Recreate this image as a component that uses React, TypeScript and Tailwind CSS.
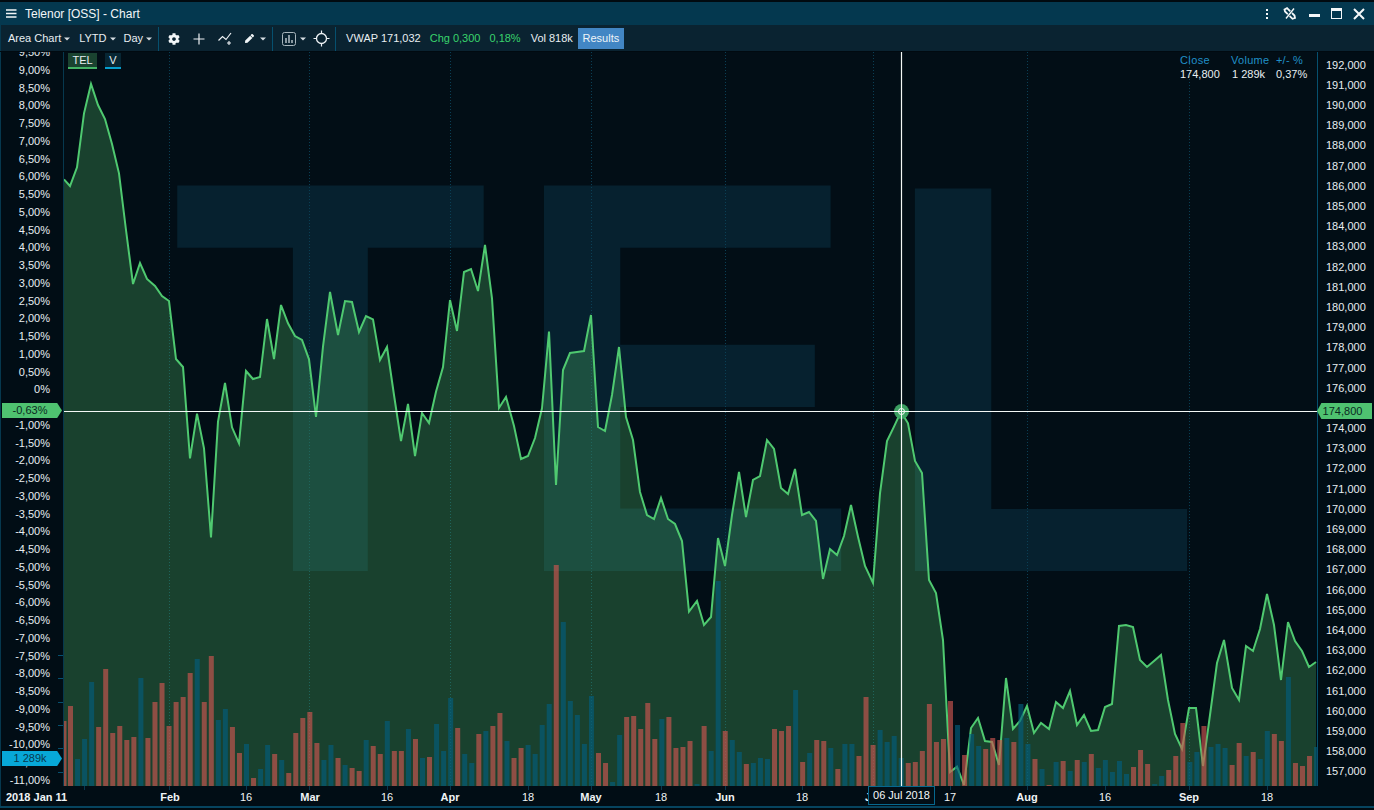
import React from "react";
import { FaCog, FaPen } from "react-icons/fa";

const seg = (ox: number, oy: number, s: string) =>
  s.trim().split(/\s+/).map((p) => {
    const [a, b] = p.split(",").map(Number);
    return [ox + a / 3, oy + b / 3] as [number, number];
  });

const linePts = [
  ...seg(60, 75, "12,313 30,333 51,277 72,115 93,27 114,90 135,132 156,207 177,295 198,465 219,627 240,564 261,612 285,633 306,663 327,678 348,852 369,876 390,1150 411,1016 432,1120 453,1387 474,1040 495,924 516,1057 537,1105 558,888 579,912 600,906 621,732 642,852 663,690 684,745 705,783 726,795 747,853 768,1026 789,815 810,651 834,780 855,678 876,681 897,771 918,723 939,733 960,855"),
  ...seg(370, 235, "51,336 72,480 93,618 114,507 135,663 156,534 177,564 198,470 219,396 240,195 261,288 282,111 303,102 324,168 345,30 366,190 387,519 408,486 432,573 453,672 474,663 495,609 516,520 537,290 558,750 579,405 600,354 621,351 642,348 663,240 684,576 705,588 726,480 747,336 768,546 789,615 810,771 831,840 852,852 873,789 894,852 915,867 936,918 957,1130"),
  ...seg(680, 400, "51,603 72,675 93,651 114,414 135,498 156,345 177,216 198,351 219,240 240,228 261,120 282,147 303,264 324,282 345,207 366,345 387,336 408,363 429,537 450,447 471,465 492,408 513,315 534,410 555,498 579,549 600,280 621,123 642,80 663,35 684,70 705,183 726,219 747,540 768,579 789,720 810,1116 831,1100 852,1155 873,984 894,954 915,1023 936,1026 957,1095"),
  ...seg(990, 580, "48,294 69,447 90,423 111,378 132,459 153,429 177,447 198,366 219,384 240,333 261,435 282,405 303,453 324,450 345,381 366,372 387,138 408,135 429,141 450,240 471,261 492,243 513,225 534,360 555,462 576,507 597,384 618,384 639,558 660,405 681,249 702,180 726,324 747,360 768,198 789,213 810,147 831,42 852,135 873,300 894,126 915,183 936,213 957,261 978,246"),
];
const lineStr = linePts.map((p) => p.join(",")).join(" ");
const areaStr = `${linePts[0][0]},786 ${lineStr} ${linePts[linePts.length - 1][0]},786`;

const barsRaw =
  "r198 b357 b297 b126 r261 r87 r279 r258 r300 r291 b114 r294 r186 r129 r258 r186 r171 r99 b57 r186 r48 b240 b207 r261 r339 b312 r414 b387 b315 r342 b360 r399 r279 r234 r216 r309 b360 b315 r354 " +
  "b375 r384 r393 b300 r318 r342 b243 r333 r333 b267 r297 b354 r351 b252 b333 b174 r264 b342 b369 r282 b273 r258 r219 b303 r354 r324 b315 b342 b255 b192 r-225 b-54 b183 b225 b312 b168 r339 r369 b426 b285 r231 r228 r267 r189 r297 b237 r231 r324 " +
  "r321 r303 b432 r258 b333 b-177 r273 b300 b336 r372 b369 b354 b357 r267 r273 r258 b150 r366 b339 r300 r303 b324 r387 b312 b312 r348 r171 r315 b270 b306 b288 b354 r369 r366 r333 r192 r306 r297 r183 b255 r345 b282 b318 r327 r294 r300 b294 r306 b192 " +
  "b312 r357 b387 r435 b366 r363 b393 r360 b366 r342 b384 b360 b396 b363 b402 r381 r330 r372 b432 b408 r390 r348 r249 b366 b336 r258 b321 b312 b324 r375 r309 b348 r336 b357 b273 r282 r303 b111 r369 r378 r348 b321";
const bars = barsRaw.split(" ").map((t, i) => ({
  x: 68 + 7.04 * i,
  y: 640 + Number(t.slice(1)) / 3,
  red: t[0] === "r",
}));

const pct = [
  "9,50%", "9,00%", "8,50%", "8,00%", "7,50%", "7,00%", "6,50%", "6,00%", "5,50%", "5,00%", "4,50%", "4,00%", "3,50%", "3,00%", "2,50%", "2,00%", "1,50%", "1,00%", "0,50%", "0%",
  "-0,50%", "-1,00%", "-1,50%", "-2,00%", "-2,50%", "-3,00%", "-3,50%", "-4,00%", "-4,50%", "-5,00%", "-5,50%", "-6,00%", "-6,50%", "-7,00%", "-7,50%", "-8,00%", "-8,50%", "-9,00%", "-9,50%", "-10,00%", "-10,50%", "-11,00%",
];
const prices = Array.from({ length: 36 }, (_, i) => `${192 - i},000`);
const months = [169, 309, 450, 591, 725, 873, 1027, 1189];
const xLabels: [string, number, boolean][] = [
  ["Feb", 170, true], ["16", 246, false], ["Mar", 310, true], ["16", 387, false], ["Apr", 450, true], ["18", 528, false], ["May", 591, true], ["18", 661, false],
  ["Jun", 725, true], ["18", 802, false], ["Jul", 873, true], ["17", 950, false], ["Aug", 1027, true], ["16", 1105, false], ["Sep", 1189, true], ["18", 1267, false],
];
const xTicks = [84, 169, 246, 309, 387, 450, 528, 591, 661, 725, 802, 873, 950, 1027, 1105, 1189, 1267];
const leftTicks = [655, 678, 702, 725, 748, 772];
const wmFont = "'Liberation Sans', Arial, sans-serif";

const Caret = () => (
  <svg width="6" height="4" viewBox="0 0 6 4" className="ml-[3px] shrink-0">
    <path d="M0 0.5H6L3 3.5Z" fill="#d5dde2" />
  </svg>
);
const Sep = ({ cls }: { cls: string }) => <div className={`h-[24px] w-px bg-[#06506f] ${cls}`} />;

export default function App() {
  return (
    <div className="relative flex h-[810px] w-[1374px] flex-col overflow-hidden bg-[#010a10] text-[11px] text-[#e8eef2] [font-family:'Liberation_Sans',Arial,sans-serif]">
      <div className="h-[2px] shrink-0 bg-[#010a10]" />
      {/* title bar */}
      <div className="flex h-[23px] shrink-0 items-center border-l border-[#06384e] bg-[#04384f]">
        <svg width="11" height="9" viewBox="0 0 11 9" className="ml-[5px]">
          <path d="M0 1H10.5M0 4.5H10.5M0 8H10.5" stroke="#f2f6f8" strokeWidth="1.3" />
        </svg>
        <div className="ml-[8px] text-[12px] text-[#f2f6f8]">Telenor [OSS] - Chart</div>
        <div className="ml-auto flex items-center">
          <svg width="4" height="12" viewBox="0 0 4 12" className="mr-[14px]">
            <path d="M1 1h2v2H1zM1 5h2v2H1zM1 9h2v2H1z" fill="#f4f7f9" />
          </svg>
          <svg width="14" height="13" viewBox="0 0 14 13" fill="none" className="mr-[12px]">
            <path d="M1.5 2.5 L4 1.2 L11.5 8.5 L12 11 L9.5 11.8 L2 4.5 Z" stroke="#f4f7f9" strokeWidth="1.8" />
            <path d="M11.5 1 L2.5 12" stroke="#04384f" strokeWidth="2.6" />
            <path d="M11 1.5 L3 11.5" stroke="#f4f7f9" strokeWidth="1.4" />
          </svg>
          <div className="mr-[11px] mt-[4px] h-[3px] w-[11px] bg-[#f4f7f9]" />
          <div className="mr-[11px] h-[11px] w-[11px] border border-t-[3px] border-[#f4f7f9]" />
          <svg width="12" height="12" viewBox="0 0 12 12" className="mr-[9px]">
            <path d="M1 1L11 11M11 1L1 11" stroke="#f4f7f9" strokeWidth="2" />
          </svg>
        </div>
      </div>
      {/* toolbar */}
      <div className="flex h-[26px] shrink-0 items-center border-l border-[#06384e] bg-[#0a2331] pl-[7px] pt-px">
        <span>Area Chart</span>
        <Caret />
        <span className="ml-[9px]">LYTD</span>
        <Caret />
        <span className="ml-[8px]">Day</span>
        <Caret />
        <Sep cls="ml-[6px]" />
        <FaCog className="ml-[9px] text-[12px] text-[#f2f6f8]" />
        <svg width="12" height="12" viewBox="0 0 12 12" className="ml-[13px]">
          <path d="M6 0.5V11.5M0.5 6H11.5" stroke="#eef2f5" strokeWidth="1.2" />
        </svg>
        <svg width="17" height="13" viewBox="0 0 17 13" fill="none" className="ml-[13px]">
          <path d="M0.5 8.5L4.5 4.5L8 7.5L13 1" stroke="#eef2f5" strokeWidth="1.2" />
          <path d="M11 9V13M9 11H13" stroke="#eef2f5" strokeWidth="1.1" />
        </svg>
        <FaPen className="ml-[10px] text-[9px] text-[#f2f6f8]" />
        <span className="ml-[3px]"><Caret /></span>
        <Sep cls="ml-[6px]" />
        <svg width="14" height="14" viewBox="0 0 14 14" fill="none" className="ml-[9px]">
          <rect x="0.5" y="0.5" width="13" height="13" rx="2" stroke="#a9b6bd" strokeWidth="1" />
          <path d="M4 11V6M7 11V3M10 11V8" stroke="#a9b6bd" strokeWidth="1.6" />
        </svg>
        <span className="ml-[1px]"><Caret /></span>
        <svg width="17" height="17" viewBox="0 0 17 17" fill="none" className="ml-[7px]">
          <circle cx="8.5" cy="8.5" r="5" stroke="#eef2f5" strokeWidth="1.3" />
          <path d="M8.5 0.5V3.5M8.5 13.5V16.5M0.5 8.5H3.5M13.5 8.5H16.5" stroke="#eef2f5" strokeWidth="1.2" />
        </svg>
        <Sep cls="ml-[5px]" />
        <span className="ml-[10px]">VWAP 171,032</span>
        <span className="ml-[9px] text-[#39d46c]">Chg 0,300</span>
        <span className="ml-[9px] text-[#39d46c]">0,18%</span>
        <span className="ml-[10px]">Vol 818k</span>
        <div className="ml-[5px] flex h-[21px] w-[46px] items-center justify-center bg-[#4286c4] text-[#eef4f8]">Results</div>
      </div>
      <div className="h-px shrink-0 bg-[#010a10]" />
      {/* chart row */}
      <div className="flex h-[734px] shrink-0">
        <div className="relative w-[64px] shrink-0 overflow-hidden border-l border-r border-[#06384e] bg-[#010d15] pr-[13px]">
          <div className="mt-[-8.4px] flex flex-col items-end">
            {pct.map((p) => (
              <div key={p} className="flex h-[17.75px] items-center">{p}</div>
            ))}
          </div>
          {leftTicks.map((y) => (
            <div key={y} className="absolute right-0 h-px w-[5px] bg-[#06506f]" style={{ top: y - 52 }} />
          ))}
        </div>
        <svg width="1253" height="734" viewBox="64 52 1253 734" className="shrink-0 overflow-visible">
          <rect x="64" y="52" width="1253" height="734" fill="#020e16" />
          <text transform="translate(171.4 571) scale(0.936 1.008)" fontFamily={wmFont} fontWeight="700" fontSize="556" fill="#06212f">T</text>
          <text transform="translate(508.5 571) scale(0.953 1.008)" fontFamily={wmFont} fontWeight="700" fontSize="556" fill="#06212f">E</text>
          <text transform="translate(879.4 571) scale(0.954 1)" fontFamily={wmFont} fontWeight="700" fontSize="556" fill="#06212f">L</text>
          {months.map((x) => (
            <line key={x} x1={x + 0.5} x2={x + 0.5} y1="52" y2="786" stroke="#0a3f55" strokeWidth="1" strokeDasharray="1 2" />
          ))}
          <polygon points={areaStr} fill="rgb(90,205,110)" fillOpacity="0.27" />
          <polyline points={lineStr} fill="none" stroke="#4fc970" strokeWidth="2" strokeLinejoin="miter" />
          <rect x="64" y="721" width="2.5" height="65" fill="#ce5650" fillOpacity="0.65" />
          {bars.map((b, i) => (
            <rect key={i} x={b.x} y={b.y} width="5" height={786 - b.y} fill={b.red ? "#ce5650" : "#035e7d"} fillOpacity="0.65" />
          ))}
          <line x1="64" x2="1317" y1="411.5" y2="411.5" stroke="#f4f8f6" strokeWidth="1.2" />
          <line x1="901.5" x2="901.5" y1="52" y2="786" stroke="#f4f8f6" strokeWidth="1.2" />
          <circle cx="901.5" cy="411.5" r="7.5" fill="#3fa765" fillOpacity="0.95" />
          <circle cx="901.5" cy="411.5" r="3" fill="none" stroke="#ffffff" strokeWidth="1" />
          <line x1="64" x2="1317" y1="411.5" y2="411.5" stroke="#f4f8f6" strokeWidth="1" />
          <line x1="901.5" x2="901.5" y1="52" y2="786" stroke="#f4f8f6" strokeWidth="1" />
        </svg>
        <div className="w-[57px] shrink-0 border-l border-[#06506f] bg-[#010d15] pl-[8px] pt-[2.9px]">
          {prices.map((p) => (
            <div key={p} className="flex h-[20.2px] items-center">{p}</div>
          ))}
        </div>
      </div>
      {/* x axis */}
      <div className="relative h-[20px] shrink-0 border-l border-[#06384e] bg-[#010d15]">
        <div className="absolute left-[5px] top-[5px] text-[11px] font-bold leading-[13px] text-[#f0f4f6]">2018 Jan 11</div>
        {xTicks.map((x) => (
          <div key={x} className="absolute top-0 h-[4px] w-px bg-[#06384e]" style={{ left: x - 1 }} />
        ))}
        {xLabels.map(([t, x, b]) => (
          <div
            key={t + x}
            className={`absolute top-[5px] -translate-x-1/2 leading-[13px] text-[#f0f4f6] ${b ? "font-bold" : ""}`}
            style={{ left: x - 1 }}
          >
            {t}
          </div>
        ))}
      </div>
      <div className="h-[2px] shrink-0 bg-[#06445f]" />
      <div className="h-[2px] shrink-0 bg-[#010a10]" />

      {/* overlays */}
      <div className="absolute left-[68px] top-[53px] flex h-[16px] w-[29px] items-start justify-center border-b-2 border-[#43b365] bg-[#1a4330] leading-[14px]">TEL</div>
      <div className="absolute left-[105px] top-[53px] flex h-[16px] w-[16px] items-start justify-center border-b-2 border-[#069fcf] bg-[#072633] leading-[14px]">V</div>

      <div className="absolute left-[1180px] top-[54px] flex gap-[12px]">
        <div className="flex w-[39px] flex-col">
          <span className="leading-[13px] tracking-[0.4px] text-[#2090c8]">Close</span>
          <span className="leading-[15px]">174,800</span>
        </div>
        <div className="flex w-[33px] flex-col">
          <span className="whitespace-nowrap leading-[13px] tracking-[0.3px] text-[#2090c8]">Volume</span>
          <span className="whitespace-nowrap pl-px leading-[15px]">1 289k</span>
        </div>
        <div className="flex flex-col">
          <span className="leading-[13px] tracking-[0.2px] text-[#2090c8]">+/- %</span>
          <span className="leading-[15px]">0,37%</span>
        </div>
      </div>

      <div className="absolute left-[2px] top-[403px] flex h-[15px] w-[60px] items-center justify-center bg-[#4fc270] pr-[4px] text-[#0b2a22] [clip-path:polygon(0_0,92%_0,100%_50%,92%_100%,0_100%)]">-0,63%</div>
      <div className="absolute left-[2px] top-[751px] flex h-[15px] w-[60px] items-center justify-center bg-[#07a8d8] pr-[4px] text-[#07384f] [clip-path:polygon(0_0,92%_0,100%_50%,92%_100%,0_100%)]">1 289k</div>
      <div className="absolute left-[1317px] top-[403px] flex h-[16px] w-[55px] items-center justify-center bg-[#4fc270] pr-[4px] text-[#0b2a22] [clip-path:polygon(8%_0,100%_0,100%_100%,8%_100%,0_50%)]">174,800</div>
      <div className="absolute left-[868px] top-[786px] flex h-[19px] w-[67px] items-center justify-center border border-[#06688f] bg-[#020e16] text-[#f4f8fa]">06 Jul 2018</div>
    </div>
  );
}
